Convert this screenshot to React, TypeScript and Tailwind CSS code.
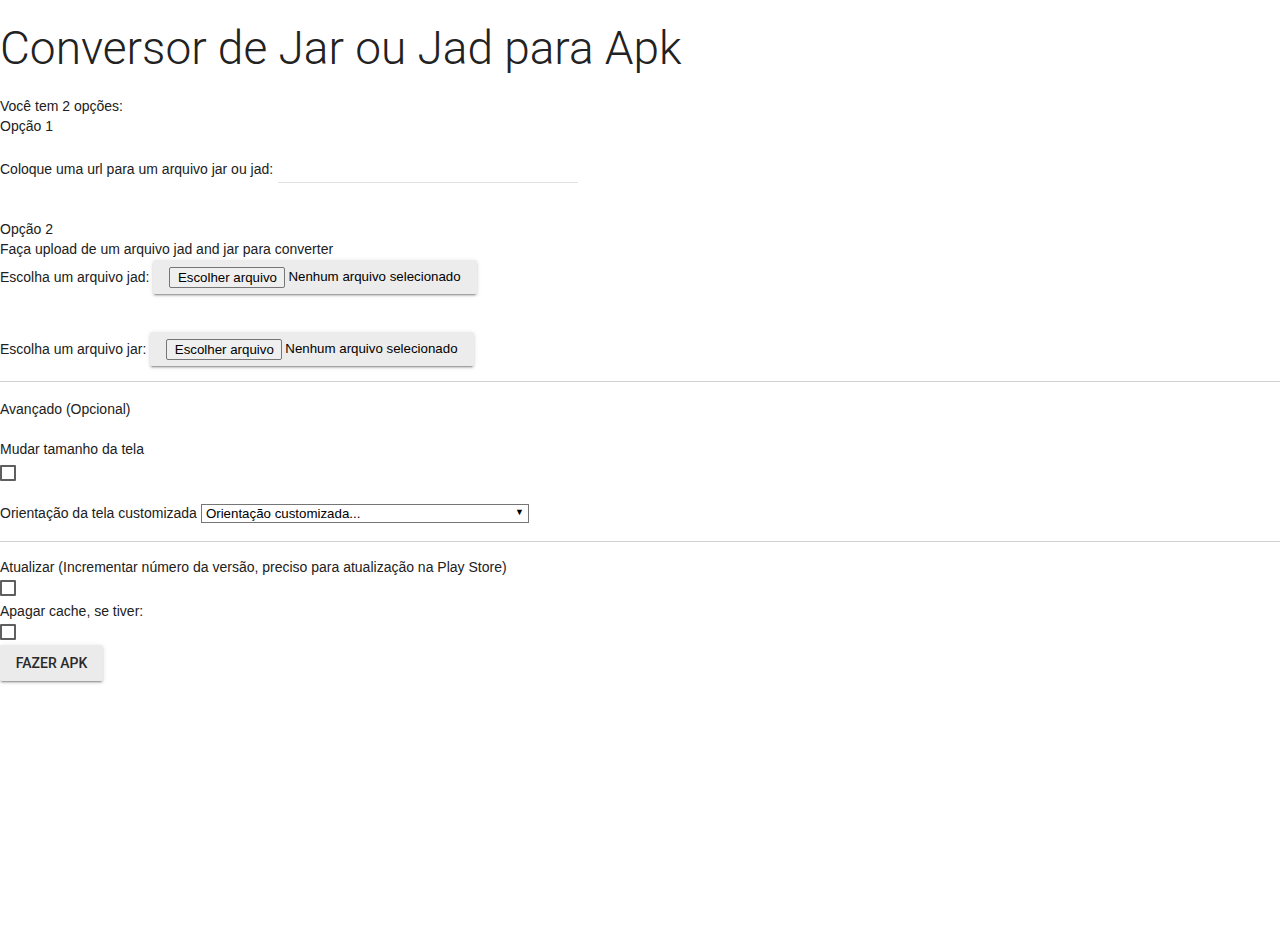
import React from 'react';

function FileRow({ label }: { label: string }) {
  return (
    <div className="flex items-center h-[36px]">
      <span>{label}</span>
      <div className="ml-[4px] h-[34px] flex items-center pl-[16px] pr-[16px] bg-[#ececec] rounded-[2px] shadow-[0_2px_2px_0_rgba(0,0,0,0.14),0_1px_5px_0_rgba(0,0,0,0.12),0_3px_1px_-2px_rgba(0,0,0,0.2)] text-[13.3px]">
        <button className="h-[21px] w-[116px] border border-[#767676] bg-[#efefef] rounded-[2px] text-[13.3px] leading-[19px] text-black">
          Escolher arquivo
        </button>
        <span className="ml-[3px] text-black">Nenhum arquivo selecionado</span>
      </div>
    </div>
  );
}

function Check() {
  return <div className="w-[16px] h-[16px] border-2 border-[#5f5f5f] rounded-[1px]" />;
}

export default function App() {
  return (
    <div className="bg-white min-h-[942px] text-[#212121] text-[14px] leading-[20px] font-['Liberation_Sans',Arial,sans-serif]">
      <h1 className="pt-[20px] h-[76px] mb-[20px] text-[46px] leading-[56px] font-light text-[#222] font-['Roboto',sans-serif]">
        Conversor de Jar ou Jad para Apk
      </h1>
      <div>Você tem 2 opções:</div>
      <div>Opção 1</div>

      <div className="mt-[23px] flex items-start">
        <label>Coloque uma url para um arquivo jar ou jad:</label>
        <input
          type="text"
          className="ml-[5px] w-[300px] h-[24px] border-b border-[#e0e0e0] outline-none"
        />
      </div>

      <div className="mt-[36px]">Opção 2</div>
      <div>Faça upload de um arquivo jad and jar para converter</div>
      <FileRow label="Escolha um arquivo jad:" />
      <div className="mt-[36px]">
        <FileRow label="Escolha um arquivo jar:" />
      </div>

      <hr className="mt-[14px] border-0 border-t border-[#d0d0d0]" />

      <div className="mt-[17px]">Avançado (Opcional)</div>
      <div className="mt-[20px]">Mudar tamanho da tela</div>
      <div className="mt-[6px]">
        <Check />
      </div>

      <div className="mt-[22px] flex items-center h-[20px]">
        <span>Orientação da tela customizada</span>
        <div className="relative ml-[4px]">
          <select className="appearance-none w-[328px] h-[19px] border border-[#767676] bg-white pl-[4px] text-[13.3px] leading-[17px] text-black outline-none font-['Liberation_Sans',Arial,sans-serif]">
            <option>Orientação customizada...</option>
          </select>
          <span className="absolute right-[5px] top-[3px] text-[9px] leading-[12px] text-black pointer-events-none">▼</span>
        </div>
      </div>

      <hr className="mt-[18px] border-0 border-t border-[#d0d0d0]" />

      <div className="mt-[15px]">Atualizar (Incrementar número da versão, preciso para atualização na Play Store)</div>
      <div className="mt-[3px]">
        <Check />
      </div>
      <div className="mt-[5px]">Apagar cache, se tiver:</div>
      <div className="mt-[3px]">
        <Check />
      </div>

      <button className="mt-[5px] h-[36px] w-[103px] bg-[#ebebeb] rounded-[2px] text-[14px] font-medium text-[#2a2a2a] font-['Roboto',sans-serif] shadow-[0_2px_2px_0_rgba(0,0,0,0.14),0_1px_5px_0_rgba(0,0,0,0.12),0_3px_1px_-2px_rgba(0,0,0,0.2)]">
        FAZER APK
      </button>
    </div>
  );
}
